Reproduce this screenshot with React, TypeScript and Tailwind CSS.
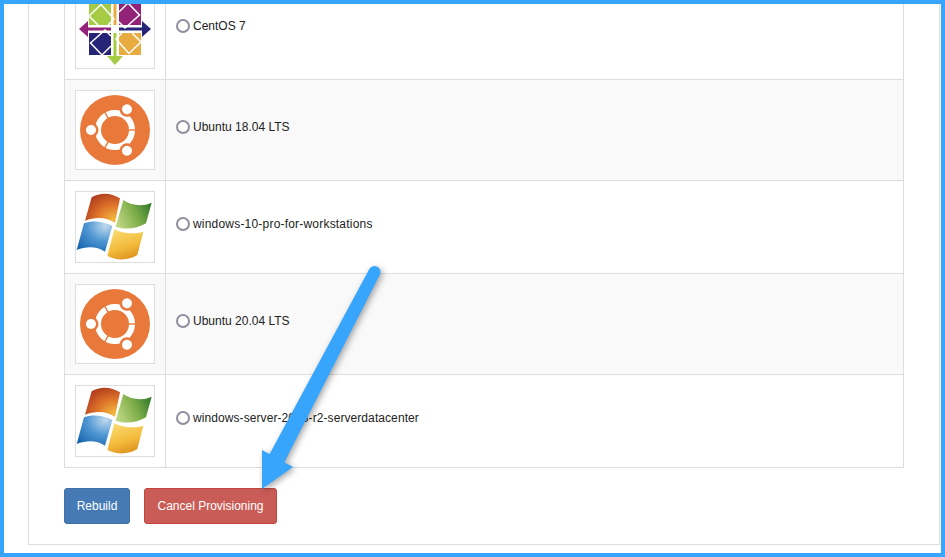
const rows = [
  { logo: "centos", label: "CentOS 7", tracking: "" },
  { logo: "ubuntu", label: "Ubuntu 18.04 LTS", tracking: "" },
  { logo: "windows", label: "windows-10-pro-for-workstations", tracking: "tracking-[0.2px]" },
  { logo: "ubuntu", label: "Ubuntu 20.04 LTS", tracking: "" },
  { logo: "windows", label: "windows-server-2008-r2-serverdatacenter", tracking: "tracking-[0.08px]" },
];

function CentosLogo() {
  const quadrants = [
    { rotate: 0, fill: "#a5cb45" },
    { rotate: 90, fill: "#932279" },
    { rotate: 180, fill: "#e8ab3f" },
    { rotate: 270, fill: "#262577" },
  ];
  const arrows = [
    { rotate: 0, fill: "#e8ab3f" },
    { rotate: 90, fill: "#262577" },
    { rotate: 180, fill: "#a5cb45" },
    { rotate: 270, fill: "#932279" },
  ];
  return (
    <svg className="block blur-[0.3px]" width="78" height="78" viewBox="-39 -39 78 78">
      {arrows.map((item) => (
        <path
          key={item.rotate}
          transform={`rotate(${item.rotate})`}
          d="M-1.5 -4 L-1.5 -27 L-8 -27 L0 -36 L8 -27 L1.5 -27 L1.5 -4 Z"
          fill={item.fill}
        />
      ))}
      {quadrants.map((item) => (
        <g key={item.rotate} transform={`rotate(${item.rotate})`}>
          <rect x="-26" y="-26" width="22" height="22" fill={item.fill} />
          <path d="M-17 -4 L-26 -13 L-14 -24.5 L-1 -10 L-7 -4" fill="none" stroke="#fff" strokeWidth="1.5" />
        </g>
      ))}
      <circle r="3.5" fill="#fff" />
    </svg>
  );
}

function UbuntuLogo() {
  const nodes = [-60, 60, 180];
  return (
    <svg className="block blur-[0.3px]" width="78" height="78" viewBox="-39 -39 78 78">
      <circle r="35" fill="#e8793a" />
      <circle r="17" fill="none" stroke="#fff" strokeWidth="6" />
      {[0, 120, 240].map((angle) => (
        <rect key={angle} x="12" y="-0.7" width="10" height="1.4" fill="#e8793a" transform={`rotate(${angle})`} />
      ))}
      {nodes.map((angle) => (
        <g key={angle} transform={`rotate(${angle}) translate(24 0)`}>
          <circle r="7.5" fill="#e8793a" />
          <circle r="5" fill="#fff" />
        </g>
      ))}
    </svg>
  );
}

function WindowsLogo({ id }: { id: string }) {
  return (
    <svg className="block blur-[0.4px]" width="78" height="70" viewBox="48 36 234 210">
      <defs>
        <radialGradient id={`${id}-r`} cx="0.85" cy="0.9" r="1.05">
          <stop offset="0" stopColor="#f4bb3e" />
          <stop offset="0.5" stopColor="#dd7229" />
          <stop offset="1" stopColor="#ab351c" />
        </radialGradient>
        <linearGradient id={`${id}-g`} x1="0" y1="0.7" x2="1" y2="0.3">
          <stop offset="0" stopColor="#bfd682" />
          <stop offset="0.55" stopColor="#7dad49" />
          <stop offset="1" stopColor="#357c2c" />
        </linearGradient>
        <radialGradient id={`${id}-b`} cx="0.8" cy="0.15" r="1">
          <stop offset="0" stopColor="#bfd9ee" />
          <stop offset="0.5" stopColor="#4f97d3" />
          <stop offset="1" stopColor="#1b67af" />
        </radialGradient>
        <linearGradient id={`${id}-y`} x1="0.2" y1="0" x2="0.6" y2="1">
          <stop offset="0" stopColor="#f9dc72" />
          <stop offset="0.6" stopColor="#f3bb3c" />
          <stop offset="1" stopColor="#dd931d" />
        </linearGradient>
      </defs>
      <path d="M95 52 C120 36 155 38 180 55 L165 128 C140 110 105 110 75 122 Z" fill={`url(#${id}-r)`} />
      <path d="M190 60 C215 78 250 80 275 68 L258 130 C230 147 195 150 167 140 Z" fill={`url(#${id}-g)`} />
      <path d="M72 130 C100 120 130 125 157 138 L135 215 C110 198 80 198 50 210 Z" fill={`url(#${id}-b)`} />
      <path d="M163 148 C190 162 225 162 250 155 L232 225 C205 242 170 242 142 228 Z" fill={`url(#${id}-y)`} />
    </svg>
  );
}

function Logo({ name, id }: { name: string; id: string }) {
  if (name === "centos") {
    return (
      <div className="flex h-20 w-20 items-center justify-center border border-[#ddd] bg-white">
        <CentosLogo />
      </div>
    );
  }
  if (name === "ubuntu") {
    return (
      <div className="flex h-20 w-20 items-center justify-center border border-[#ddd] bg-white">
        <UbuntuLogo />
      </div>
    );
  }
  return (
    <div className="flex h-[72px] w-20 items-center justify-center border border-[#ddd] bg-white">
      <WindowsLogo id={id} />
    </div>
  );
}

export default function App() {
  return (
    <div className="relative h-[557px] w-[945px] overflow-hidden border-4 border-[#38a5fd] bg-white font-['Liberation_Sans',Arial,sans-serif] text-xs text-[#222]">
      <div className="mt-[-44px] ml-6 mr-[1px] border border-[#ddd] px-[35px] pt-[17px] pb-5">
        <table className="w-[840px] table-fixed border-collapse border border-[#ddd]">
          <tbody>
            {rows.map((row, index) => (
              <tr key={index} className={index % 2 === 1 ? "bg-[#f9f9f9]" : "bg-white"}>
                <td className="w-[101px] border border-[#ddd] p-[10px]">
                  <Logo name={row.logo} id={`win-${index}`} />
                </td>
                <td className="border border-[#ddd] px-[10px] pb-[6px] align-middle">
                  <label className={`flex items-center gap-[3px] ${row.tracking}`}>
                    <input
                      type="radio"
                      name="os"
                      className="h-[14px] w-[14px] appearance-none rounded-full border-2 border-[#8f8f9f] bg-white"
                    />
                    {row.label}
                  </label>
                </td>
              </tr>
            ))}
          </tbody>
        </table>
        <div className="mt-5 flex gap-[14px]">
          <button type="button" className="h-9 w-[66px] rounded-[3px] border border-[#3f70a8] bg-[#457ab5] text-white">
            Rebuild
          </button>
          <button type="button" className="h-9 w-[133px] rounded-[3px] border border-[#c2453f] bg-[#c95c56] text-white">
            Cancel Provisioning
          </button>
        </div>
      </div>
      {/* annotation arrow, coords are page coords shifted by the 4px frame */}
      <svg className="absolute top-[-4px] left-[-4px] drop-shadow-[2px_2px_3px_rgba(0,0,0,0.35)]" width="945" height="557">
        <circle cx="374.5" cy="272" r="6" fill="#38a5fd" />
        <path d="M369.2 269.2 L379.8 274.8 L283 465 L268 457 Z" fill="#38a5fd" />
        <path d="M262 450 L293 467 L262 489 Z" fill="#38a5fd" />
      </svg>
    </div>
  );
}
